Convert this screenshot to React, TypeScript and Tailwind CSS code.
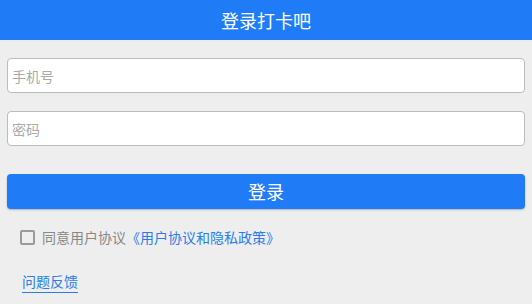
import React, { useState } from "react";

const App: React.FC = () => {
  const [agree, setAgree] = useState(false);

  return (
    <div
      className="min-h-[304px] w-full bg-[#eeeeee]"
      style={{ fontFamily: '"Noto Sans CJK SC", "Noto Sans", sans-serif' }}
    >
      <div className="flex h-10 items-center justify-center bg-[#1f7cf6] text-[18px] text-white">
        登录打卡吧
      </div>

      <div className="px-[7px] pt-[18px]">
        <input
          autoFocus
          type="tel"
          placeholder="手机号"
          className="block h-[35px] w-full rounded-[4px] border border-[#bcbcbc] bg-white pl-[4px] text-[14px] text-[#333] outline-none placeholder:text-[#aaaaaa]"
        />
        <input
          type="password"
          placeholder="密码"
          className="mt-[18px] block h-[35px] w-full rounded-[4px] border border-[#bcbcbc] bg-white pl-[4px] text-[14px] text-[#333] outline-none placeholder:text-[#aaaaaa]"
        />

        <button className="mt-[28px] flex h-[35px] w-full items-center justify-center rounded-[4px] bg-[#1f7cf6] text-[18px] text-white shadow-[0_1px_2px_rgba(0,0,0,0.25)]">
          登录
        </button>

        <div className="mt-[18px] flex h-5 items-center pl-[13px] text-[14px]">
          <button
            onClick={() => setAgree(!agree)}
            className="mr-[7px] h-[15px] w-[15px] rounded-[2px] border-2 border-[#9a9a9a] bg-transparent"
          />
          <span className="text-[#888888]">同意用户协议</span>
          <span className="text-[#2b7de9]">《用户协议和隐私政策》</span>
        </div>

        <div className="mt-[21px] pl-[15px]">
          <span className="inline-block border-b border-[#2b7de9] pb-[1px] text-[14px] leading-5 text-[#2b7de9]">
            问题反馈
          </span>
        </div>
      </div>
    </div>
  );
};

export default App;
